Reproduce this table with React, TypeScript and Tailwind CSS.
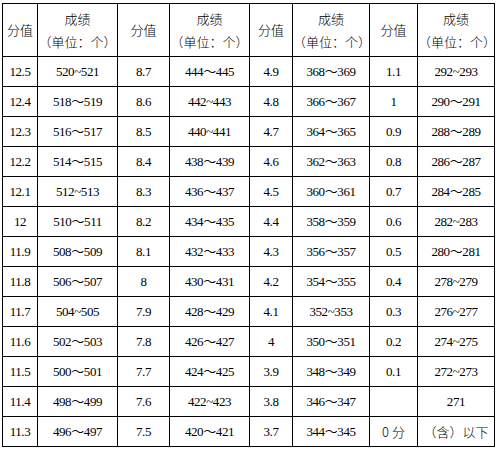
const L = "～";

type Row = [string, string, string, string, string, string, string, string];

const ROWS: Row[] = [
  ["12.5", "520~521", "8.7", `444${L}445`, "4.9", `368${L}369`, "1.1", "292~293"],
  ["12.4", `518${L}519`, "8.6", "442~443", "4.8", `366${L}367`, "1", `290${L}291`],
  ["12.3", `516${L}517`, "8.5", "440~441", "4.7", `364${L}365`, "0.9", `288${L}289`],
  ["12.2", `514${L}515`, "8.4", `438${L}439`, "4.6", `362${L}363`, "0.8", `286${L}287`],
  ["12.1", "512~513", "8.3", `436${L}437`, "4.5", `360${L}361`, "0.7", `284${L}285`],
  ["12", `510${L}511`, "8.2", `434${L}435`, "4.4", `358${L}359`, "0.6", "282~283"],
  ["11.9", `508${L}509`, "8.1", `432${L}433`, "4.3", `356${L}357`, "0.5", `280${L}281`],
  ["11.8", `506${L}507`, "8", `430${L}431`, "4.2", `354${L}355`, "0.4", "278~279"],
  ["11.7", "504~505", "7.9", `428${L}429`, "4.1", "352~353", "0.3", "276~277"],
  ["11.6", `502${L}503`, "7.8", `426${L}427`, "4", `350${L}351`, "0.2", "274~275"],
  ["11.5", `500${L}501`, "7.7", `424${L}425`, "3.9", `348${L}349`, "0.1", "272~273"],
  ["11.4", `498${L}499`, "7.6", "422~423", "3.8", `346${L}347`, "", "271"],
  ["11.3", `496${L}497`, "7.5", `420${L}421`, "3.7", `344${L}345`, "0 分", "（含）以下"],
];

function HeaderCells() {
  return (
    <>
      {[0, 1, 2, 3].map((i) => (
        <div key={i} className="contents">
          <div className="flex h-[53px] items-center justify-center border-r border-b border-black font-[family-name:Noto_Sans_CJK_SC] text-[13px] font-light">
            分值
          </div>
          <div className="flex h-[53px] flex-col items-center justify-center border-r border-b border-black font-[family-name:Noto_Sans_CJK_SC] text-[13px] font-light leading-[23px]">
            <span>成绩</span>
            <span>（单位：个）</span>
          </div>
        </div>
      ))}
    </>
  );
}

export default function App() {
  return (
    <div className="h-[449px] w-[498px] bg-white pt-[3px] pl-[2px] text-black">
      <div className="grid w-[493px] grid-cols-[35px_80px_52px_80px_43px_77px_48px_77px] border-t border-l border-black">
        <HeaderCells />
        {ROWS.map((row, r) =>
          row.map((cell, c) => {
            const cjk = /[分含以下]/.test(cell);
            return (
              <div
                key={`${r}-${c}`}
                className={
                  cjk
                    ? "flex h-[30px] items-center justify-center whitespace-nowrap border-r border-b border-black font-[family-name:Noto_Sans_CJK_SC] text-[13px] font-light"
                    : "flex h-[30px] items-center justify-center whitespace-nowrap border-r border-b border-black font-[family-name:Liberation_Serif,Noto_Sans_CJK_SC] text-[13px] tracking-[-0.4px]"
                }
              >
                {cell}
              </div>
            );
          })
        )}
      </div>
    </div>
  );
}
